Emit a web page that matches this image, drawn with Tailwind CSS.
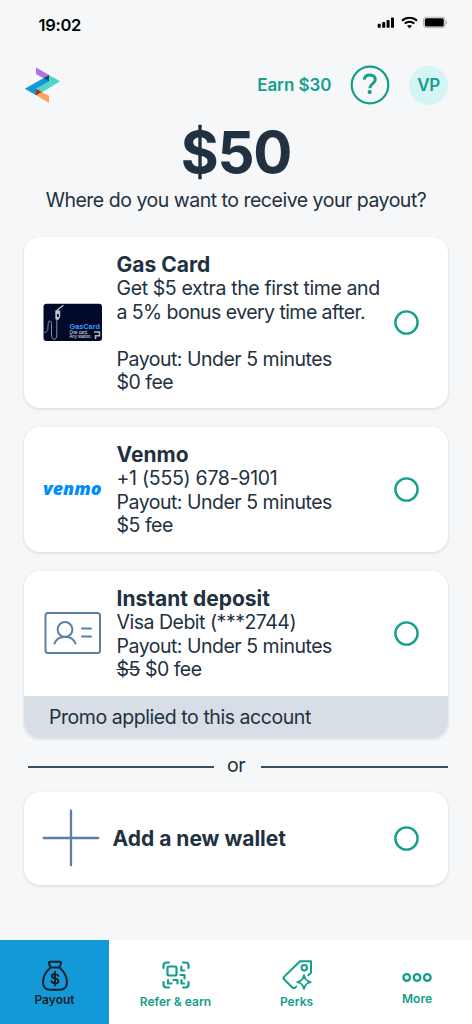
<!DOCTYPE html>
<html lang="en">
<head>
<meta charset="utf-8">
<title>Payout</title>
<script src="https://cdn.jsdelivr.net/npm/@tailwindcss/browser@4"></script>
</head>
<body class="bg-[#f5f7f9] font-['Inter',sans-serif] text-[#213140]">
<div class="flex h-[1024px] w-[472px] flex-col overflow-hidden">

  <!-- Status bar -->
  <div class="flex h-[50px] shrink-0 items-center justify-between pl-[38.5px] pr-[24px] text-black">
    <span class="text-[16.5px] font-semibold leading-none tracking-[-0.3px]">19:02</span>
    <div class="flex h-3 -translate-y-[2.5px] items-center gap-[5.5px]">
      <svg width="18" height="12" viewBox="0 0 18 12"><rect x="0.7" y="7.3" width="3" height="4" rx="0.9"/><rect x="5.2" y="5.6" width="3" height="5.7" rx="0.9"/><rect x="9.6" y="3.4" width="3" height="7.9" rx="0.9"/><rect x="14" y="1" width="3" height="10.3" rx="0.9"/></svg>
      <svg width="17" height="12" viewBox="0 0 17 12" fill="none" stroke="#000" stroke-width="2"><path d="M1 4.3C5.2.3 11.8.3 16 4.3"/><path d="M3.7 7.1c2.7-2.5 6.9-2.5 9.6 0"/><path d="M6 9.3c1.5-1.2 3.5-1.2 5 0L8.500 12z" fill="#000" stroke="none"/></svg>
      <svg width="25" height="12" viewBox="0 0 25 12"><rect x="0.500" y="0.500" width="21.500" height="10.800" rx="3" fill="none" stroke="#a9abad"/><rect x="1.800" y="1.700" width="19" height="8.400" rx="1.700"/><path d="M23 4v4c1.600-.6 1.600-3.400 0-4z" fill="#a9abad"/></svg>
    </div>
  </div>

  <!-- Header -->
  <div class="flex h-[70px] shrink-0 items-center pl-6 pr-6">
    <svg width="37" height="36" viewBox="0 0 37 36"><path d="M12 0.500 25 8v6.500L12 7z" fill="#b072e0"/><path d="M25 8 36 14.300 17.800 25.500 12 21.500 25 14z" fill="#4bd6c5"/><path d="M0.800 21.700 25 8v6.200L12 21.700V28.200z" fill="#1499d8"/><path d="M25 8v6.200l-5.400-3z" fill="#15497a"/><path d="M12 21.700 25 29v6.700L12 28.300z" fill="#fca45f"/><path d="M12 21.700 17.800 25 12 28.300z" fill="#b52c23"/></svg>
    <span class="ml-auto text-[17px] font-semibold leading-none tracking-[-0.05px] text-[#179e8c]">Earn $30</span>
    <svg class="ml-[18.500px]" width="40" height="40" viewBox="0 0 40 40" fill="none" stroke="#129f8b"><circle cx="20" cy="20" r="18.300" stroke-width="2.200"/><path d="M14.400 14.600c.2-2.900 2.500-4.600 5.500-4.600 3.200 0 5.400 1.800 5.400 4.500 0 4.600-5.500 4.100-5.500 8.700" stroke-width="3" stroke-linecap="butt"/><circle cx="19.700" cy="27.100" r="2.100" fill="#129f8b" stroke="none"/></svg>
    <div class="ml-[19px] flex size-[39px] items-center justify-center rounded-full bg-[#d5f5f5] pt-px text-[17px] font-semibold tracking-[-0.500px] text-[#179e8c]">VP</div>
  </div>

  <h1 class="mt-[4px] h-[57px] shrink-0 text-center text-[58px] font-bold leading-[57px] tracking-[-1.200px]">$50</h1>
  <p class="mt-[6px] h-[26px] shrink-0 text-center text-[19.500px] leading-[26px] tracking-[-0.490px]">Where do you want to receive your payout?</p>

  <!-- Wallets -->
  <main class="mt-6 flex flex-col pl-6 pr-6">
    <section class="flex h-[171px] items-start rounded-[16px] bg-white pt-[14.500px] shadow-[0_1px_3px_rgba(33,49,64,0.16)]">
      <svg class="ml-[19px] mt-[51px] shrink-0" width="60" height="39" viewBox="0 0 60 39"><rect x="0.500" y="0.800" width="58.500" height="37.200" rx="3" fill="#010a28"/><path d="M1 29.500c4-.5 4-3 4-6.500 0-7 3.500-6.500 3.500-1v10c0 5.500 5.300 6 5.300 0V16" fill="none" stroke="#8b929e" stroke-width="1"/><path d="M13.500 8 16 5.500 20.500 2.300" fill="none" stroke="#c4c8d0" stroke-width="1.200"/><path d="M12.300 7.500h4.900v6.300l-2.200 3.400-2.700-1.200z" fill="#c4c8d0"/><path d="M14 11h1.800v3H14z" fill="#010a28"/><text x="26.500" y="25.700" font-family="Liberation Sans" font-weight="700" font-size="7" letter-spacing="0" textLength="30.500" lengthAdjust="spacingAndGlyphs" fill="#369cf4">GasCard</text><text x="26.500" y="31" font-family="Liberation Sans" font-size="4.700" letter-spacing="0" textLength="18.500" lengthAdjust="spacingAndGlyphs" fill="#e5e7ec">One card.</text><text x="26.500" y="35.400" font-family="Liberation Sans" font-size="4.700" letter-spacing="0" textLength="22" lengthAdjust="spacingAndGlyphs" fill="#e5e7ec">Any station.</text><path d="M51 29h5.500v3.800h-4v3.200" fill="none" stroke="#b4b9c2" stroke-width="1.500"/></svg>
      <div class="ml-[13.500px] w-[276px] text-[19.500px] leading-[23.500px] tracking-[-0.490px]">
        <h2 class="text-[21px] font-bold leading-[25px] tracking-normal">Gas Card</h2>
        <p class="pt-[0.5px]"><span class="tracking-[-0.39px]">Get $5 extra the first time and</span><br><span class="tracking-[-0.56px]">a 5% bonus every time after.</span></p>
        <p class="mt-[23.500px]">Payout: Under 5 minutes</p><p>$0 fee</p>
      </div>
      <svg class="ml-px mt-[58.500px] shrink-0" width="25" height="25" viewBox="0 0 25 25" fill="none" stroke="#129f8b" stroke-width="2.400"><circle cx="12.500" cy="12.500" r="11.100"/></svg>
    </section>

    <section class="mt-[19px] flex h-[124.500px] items-start rounded-[16px] bg-white pt-[14.500px] shadow-[0_1px_3px_rgba(33,49,64,0.16)]">
      <svg class="ml-[17px] mt-[32px] shrink-0 overflow-visible" width="62" height="32" viewBox="0 0 62 32"><text x="2" y="20.500" font-family="Open Sans" font-style="italic" font-weight="800" font-size="18" letter-spacing="0" textLength="58.500" lengthAdjust="spacingAndGlyphs" fill="#008cff">venmo</text></svg>
      <div class="ml-[13.500px] w-[276px] text-[19.500px] leading-[23.500px] tracking-[-0.490px]">
        <h2 class="text-[21px] font-bold leading-[25px] tracking-normal">Venmo</h2>
        <p class="pt-[0.5px] tracking-[-0.28px]">+1 (555) 678-9101</p><p>Payout: Under 5 minutes</p><p>$5 fee</p>
      </div>
      <svg class="ml-px mt-[35px] shrink-0" width="25" height="25" viewBox="0 0 25 25" fill="none" stroke="#129f8b" stroke-width="2.400"><circle cx="12.500" cy="12.500" r="11.100"/></svg>
    </section>

    <section class="mt-[19px] h-[167.500px] overflow-hidden rounded-[16px] bg-white shadow-[0_1px_3px_rgba(33,49,64,0.16)]">
      <div class="flex h-[125px] items-start pt-[15px]">
        <svg class="ml-[19px] mt-[25.500px] shrink-0" width="60" height="44" viewBox="0 0 60 44" fill="none" stroke="#5c80a4" stroke-width="2" stroke-linecap="round"><rect x="2.500" y="2" width="54.500" height="40" rx="2.500"/><circle cx="22" cy="18.500" r="7.400"/><path d="M11.500 32.500c3.500-9 17.500-9 21 0M39 17.500h9M39 25.500h9"/></svg>
        <div class="ml-[13.500px] w-[276px] text-[19.500px] leading-[23.500px] tracking-[-0.490px]">
          <h2 class="text-[21px] font-bold leading-[25px] tracking-normal">Instant deposit</h2>
          <p class="pt-[0.5px]">Visa Debit (***2744)</p><p>Payout: Under 5 minutes</p><p><s>$5</s> $0 fee</p>
        </div>
        <svg class="ml-px mt-[35px] shrink-0" width="25" height="25" viewBox="0 0 25 25" fill="none" stroke="#129f8b" stroke-width="2.400"><circle cx="12.500" cy="12.500" r="11.100"/></svg>
      </div>
      <div class="flex h-[42.500px] items-center bg-[#d7dee5] pl-[25px] pt-px text-[19.500px] tracking-[-0.440px]">Promo applied to this account</div>
    </section>

    <div class="mt-[14px] flex h-[26px] items-center gap-[13px] pl-1">
      <div class="h-[1.500px] w-[186px] translate-y-[2px] bg-[#3a4d5f]"></div>
      <span class="w-[21px] text-[19.500px] leading-[26px] tracking-[-0.490px]">or</span>
      <div class="h-[1.500px] flex-1 translate-y-[2px] bg-[#3a4d5f]"></div>
    </div>

    <section class="mt-[14px] flex h-[92.500px] items-center rounded-[16px] bg-white shadow-[0_1px_3px_rgba(33,49,64,0.16)]">
      <svg class="ml-[18px]" width="58" height="58" viewBox="0 0 58 58" stroke="#5c80a4" stroke-width="2.300" stroke-linecap="round"><path d="M1.700 29h54.600M29 1.700v54.600"/></svg>
      <h2 class="ml-[12.500px] w-[281px] text-[21px] font-bold">Add a new wallet</h2>
      <svg class="shrink-0" width="25" height="25" viewBox="0 0 25 25" fill="none" stroke="#129f8b" stroke-width="2.400"><circle cx="12.500" cy="12.500" r="11.100"/></svg>
    </section>
  </main>

  <!-- Tab bar -->
  <nav class="mt-auto flex h-[84px] shrink-0 bg-white text-[12px] font-semibold leading-4 text-[#129f8b]">
    <div class="flex w-[109px] flex-col items-center bg-[#1499d8] pt-5 text-[#17212b]">
      <svg width="28" height="32" viewBox="0 0 28 32" fill="none" stroke="currentColor" stroke-width="2" stroke-linecap="round" stroke-linejoin="round"><path d="M9.500 7.500 8 3.200c-.3-1 .2-1.400 1-1.400h10c.8 0 1.300.5 1 1.400l-1.500 4.300zM9.500 7.500C4.500 12 2 17 2 22c0 5 3 7.700 7 7.700h10c4 0 7-2.700 7-7.700 0-5-2.500-10-7.500-14.500"/><path d="M17.300 15.800c-.5-1.300-1.700-1.900-3.300-1.900-1.900 0-3.200.9-3.200 2.300 0 3.300 6.600 1.400 6.600 4.700 0 1.500-1.400 2.400-3.400 2.400-1.800 0-3-.7-3.500-2.100M14 11.800v13.600"/></svg>
      <span>Payout</span>
    </div>
    <div class="flex w-[133px] flex-col items-center pt-5">
      <svg width="30" height="30" viewBox="0 0 30 30" fill="none" stroke="currentColor" stroke-width="2.200" stroke-linecap="round" stroke-linejoin="round"><path d="M2.500 8V5.500a3 3 0 0 1 3-3H8M22 2.500h2.500a3 3 0 0 1 3 3V8M2.500 22v2.500a3 3 0 0 0 3 3H8M22 27.500h2.500a3 3 0 0 0 3-3V22"/><rect x="6.500" y="6.500" width="9" height="9" rx="1.500"/><path d="M20.300 6.500v4h3M19.500 15h4v3.500M7 20v3.500h3.500M12.500 20h4v3.500M20.500 20v3.500H23"/></svg>
      <span class="mt-[4px]">Refer &amp; earn</span>
    </div>
    <div class="flex w-[109px] flex-col items-center pt-[19px]">
      <svg width="32" height="32" viewBox="0 0 32 32" fill="none" stroke="currentColor" stroke-width="2" stroke-linejoin="round" stroke-linecap="round"><path d="M15.300 27.500c-1.800 2.300-2.800 2.300-4.300.8l-7.700-7.800c-1-1-1-1.900 0-2.900L19 2.200h11v11.600l-2.800 2.400"/><circle cx="23.300" cy="8.800" r="2.800"/><path d="M23 16.300c.9 4.200 2.300 5.700 6.600 6.800-4.300 1.100-5.700 2.600-6.600 6.800-.9-4.200-2.300-5.700-6.600-6.800 4.300-1.100 5.700-2.600 6.600-6.800z"/></svg>
      <span class="mt-[3px]">Perks</span>
    </div>
    <div class="flex flex-1 flex-col items-center pl-[11px] pt-[32px]">
      <svg width="32" height="11" viewBox="0 0 32 11" fill="none" stroke="currentColor" stroke-width="2.300"><circle cx="5.700" cy="5.500" r="3.300"/><circle cx="16" cy="5.500" r="3.300"/><circle cx="26.300" cy="5.500" r="3.300"/></svg>
      <span class="mt-2">More</span>
    </div>
  </nav>
</div>
</body>
</html>
